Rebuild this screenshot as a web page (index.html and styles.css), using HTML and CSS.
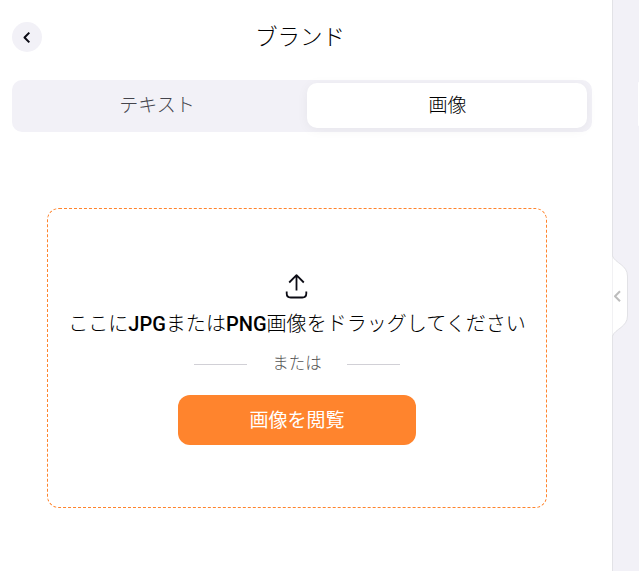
FILE: index.html
```
<!DOCTYPE html>
<html lang="ja">
  <head>
    <meta charset="UTF-8" />
    <meta name="viewport" content="width=device-width, initial-scale=1.0" />
    <title>ブランド</title>
    <link rel="stylesheet" href="styles.css">
  </head>

  <body>
    <div class="panel">
      <div class="header">
        <button class="back" aria-label="戻る">
          <svg width="30" height="30" viewBox="0 0 30 30">
            <path d="M17.3 10.6 L12.5 15.5 L17.3 20.4" />
          </svg>
        </button>
        <h1 class="title">ブランド</h1>
      </div>

      <div class="tabs">
        <button class="tab">テキスト</button>
        <button class="tab active">画像</button>
      </div>

      <div class="dropzone">
        <svg class="upload" width="24" height="26" viewBox="0 0 24 26">
          <path d="M11.5 16.5 V1.5 M4.2 8.5 L11.5 1.2 L18.8 8.5" />
          <path d="M1.7 17.5 V19.5 Q1.7 23.5 5.7 23.5 H17.3 Q21.3 23.5 21.3 19.5 V17.5" />
        </svg>
        <p class="hint">ここに<b>JPG</b>または<b>PNG</b>画像をドラッグしてください</p>
        <div class="or"><span>または</span></div>
        <button class="browse">画像を閲覧</button>
      </div>

      <svg class="handle" width="18" height="84" viewBox="0 0 18 84">
        <path class="handle-shape" d="M0.5 0 V2 C3 9 15.5 11 15.5 22 V62 C15.5 73 3 75 0.5 82 V84" />
        <path class="handle-arrow" d="M8 37.3 L3 42.3 L8 47.3" />
      </svg>
    </div>

    <div class="canvas">
      <div class="canvas-card"></div>
    </div>
  </body>
</html>
```

FILE: styles.css
```
html,
body {
  margin: 0;
  padding: 0;
  height: 100%;
  overflow: hidden;
}

body {
  display: flex;
  background-color: #f2f1f7;
  color: #000;
  font-family: Roboto, "Noto Sans CJK JP", sans-serif;
  font-weight: 300;
}

button {
  border: 0;
  padding: 0;
  font: inherit;
  color: inherit;
}

svg {
  display: block;
  fill: none;
  stroke-linejoin: round;
}

.panel {
  position: relative;
  box-sizing: border-box;
  flex: none;
  width: 613px;
  height: 100%;
  padding: 22px 20px 0 12px;
  border-right: 1px solid #e2e2e6;
  background-color: #fff;
}

.header {
  display: grid;
  grid-template-columns: 30px 1fr 34px;
  align-items: center;
  height: 30px;
}

.back {
  width: 30px;
  height: 30px;
  border-radius: 50%;
  background-color: #f2f1f7;
}

.back path {
  stroke: #0b0b14;
  stroke-width: 2;
}

.title {
  margin: 0;
  font-size: 22.5px;
  font-weight: 300;
  line-height: 30px;
  text-align: center;
}

.tabs {
  box-sizing: border-box;
  display: grid;
  grid-template-columns: 1fr 280px;
  gap: 6px;
  height: 52px;
  margin-top: 28px;
  padding: 3px 5px 4px 4px;
  border-radius: 10px;
  background-color: #f2f1f7;
}

.tab {
  padding-right: 3px;
  border-radius: 10px;
  background: none;
  font-size: 19px;
  line-height: 45px;
  color: #44444c;
}

.tab.active {
  padding: 0 0 0 1px;
  background-color: #fff;
  box-shadow: 0 2px 12px rgba(0, 0, 0, 0.05);
  color: #000;
}

.dropzone {
  box-sizing: border-box;
  display: flex;
  flex-direction: column;
  align-items: center;
  width: 500px;
  height: 300px;
  margin: 76px 0 0 35px;
  padding-top: 65px;
  border: 1px dashed #ff842d;
  border-radius: 12px;
}

.upload path {
  stroke: #0b0b14;
  stroke-width: 1.8;
}

.hint {
  margin: 9px 0 0;
  font-size: 20.05px;
  line-height: 30px;
  white-space: nowrap;
}

.hint b {
  font-weight: 500;
}

.or {
  display: flex;
  align-items: center;
  gap: 25px;
  width: 206px;
  margin-top: 13px;
  font-size: 16.5px;
  line-height: 24px;
  color: #555;
}

.or::before,
.or::after {
  content: "";
  flex: 1;
  height: 1px;
  background-color: #d1d0d6;
}

.browse {
  width: 238px;
  height: 50px;
  margin-top: 19px;
  padding-bottom: 4px;
  border-radius: 12px;
  background-color: #ff842d;
  color: #fff;
  font-size: 19px;
  font-weight: 400;
}

.handle {
  position: absolute;
  top: 254px;
  left: 612px;
}

.handle-shape {
  fill: #fff;
  stroke: #e2e2e6;
}

.handle-arrow {
  stroke: #bdbdbd;
  stroke-width: 2;
}

.canvas {
  flex: 1;
  min-width: 0;
  overflow: hidden;
  padding: 82px 0 0 25px;
}

.canvas-card {
  height: 44px;
  border-radius: 10px 0 0 10px;
  background-color: #fff;
  box-shadow: 0 0 8px rgba(0, 0, 0, 0.04);
}
```
